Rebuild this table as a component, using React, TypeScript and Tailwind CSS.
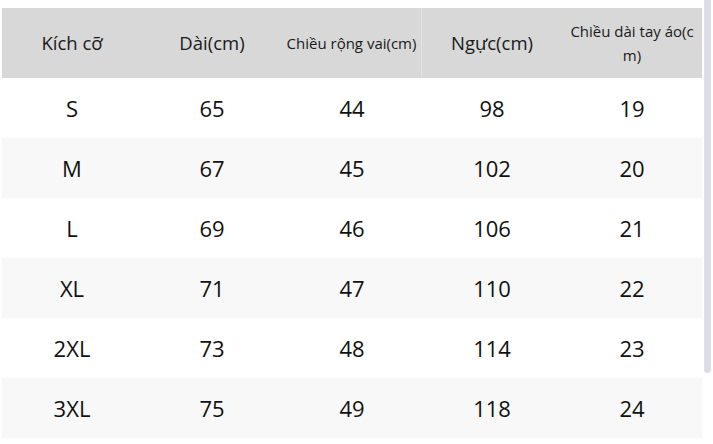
import React from "react";

const rows = [
  ["S", "65", "44", "98", "19"],
  ["M", "67", "45", "102", "20"],
  ["L", "69", "46", "106", "21"],
  ["XL", "71", "47", "110", "22"],
  ["2XL", "73", "48", "114", "23"],
  ["3XL", "75", "49", "118", "24"],
];

export default function App() {
  return (
    <div
      className="relative w-[713px] h-[444px] bg-white overflow-hidden"
      style={{ fontFamily: '"Open Sans", "Noto Sans", sans-serif' }}
    >
      <div className="pt-[8px] pl-[2px] w-[702px]">
        <div className="grid grid-cols-5 h-[70px] bg-[#d8d8d8] text-[#1a1a1a] items-center text-center">
          <div className="text-[18.5px]">Kích cỡ</div>
          <div className="text-[18.5px]">Dài(cm)</div>
          <div className="text-[15px] h-full flex items-center justify-center border-r border-[#e2e2e2]">Chiều rộng vai(cm)</div>
          <div className="text-[18.5px]">Ngực(cm)</div>
          <div className="text-[15px] leading-[24px] px-[6px] break-all">Chiều dài tay áo(cm)</div>
        </div>
        {rows.map((r, i) => (
          <div
            key={i}
            className={`grid grid-cols-5 h-[60px] items-center text-center text-[22px] text-[#111] ${i % 2 === 1 ? "bg-[#f8f8f8]" : "bg-white"}`}
          >
            {r.map((c, j) => (
              <div key={j}>{c}</div>
            ))}
          </div>
        ))}
      </div>
      <div className="absolute left-[704px] top-0 w-[7px] h-[373px] rounded-b-[4px] bg-[#dcdde6]" />
    </div>
  );
}
